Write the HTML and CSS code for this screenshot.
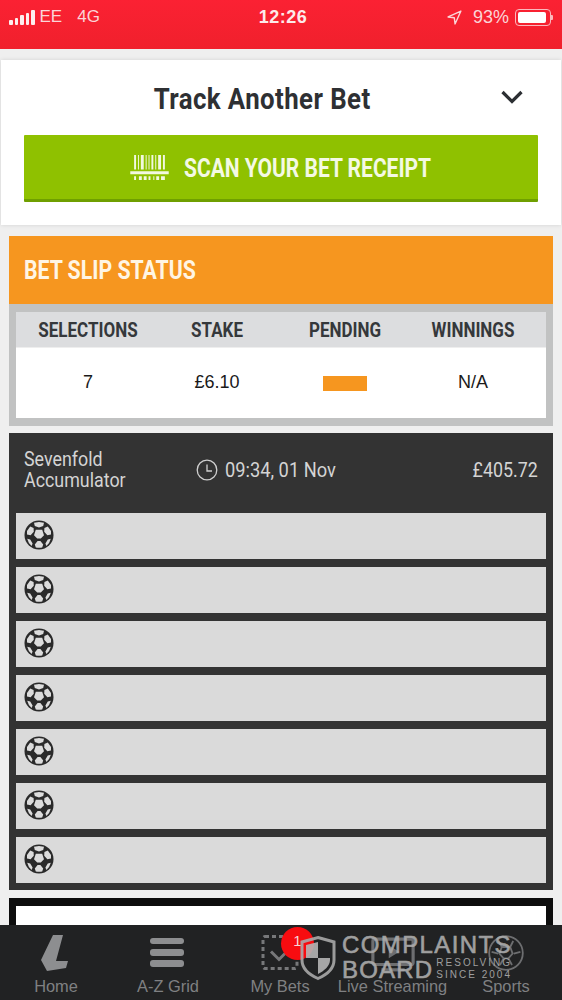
FILE: index.html
```html
<!DOCTYPE html>
<html lang="en">
<head>
<meta charset="utf-8">
<title>Bet Tracker</title>
<link rel="stylesheet" href="styles.css">
</head>
<body>
<svg class="defs" width="0" height="0" aria-hidden="true">
  <symbol id="ball" viewBox="0 0 30 30">
    <circle cx="15" cy="15" r="14.5" fill="#2a2a2a"/>
    <path class="panel" d="M10 2.800 15 2l5 .8-.8 3.200-4.200 1.600L10.800 6zM3 11l3.200-4.400 3.400 1.400.2 3.800-3.200 3.400-3.600-.6zM27 11l-3.200-4.400-3.400 1.400-.2 3.800 3.200 3.400 3.600-.6zM11.800 9.800h6.400l1.800 5.400-3.200 3.400h-3.600L10 15.200zM3.200 18.800l3 .8 2.400 3.800-1 2.600a13 13 0 0 1-4.400-7.200zM26.800 18.800l-3 .8-2.400 3.800 1 2.600a13 13 0 0 0 4.400-7.200zM10.800 24.400l2.800-3.400h2.800l2.800 3.400-1 3a13 13 0 0 1-6.400 0z"/>
  </symbol>
</svg>
<div class="page">
  <header class="status">
    <div class="status-left">
      <span class="signal"><i class="s1"></i><i class="s2"></i><i class="s3"></i><i class="s4"></i><i class="s5"></i></span>
      <span>EE</span><span class="net">4G</span>
    </div>
    <div class="status-time">12:26</div>
    <div class="status-right">
      <svg class="arrow" viewBox="0 0 14 14"><path d="M13 1 1 6.500l5.800.7.700 5.800z" fill="none" stroke="#fbd5d8" stroke-width="1.300" stroke-linejoin="round"/></svg>
      <span class="battery-pct">93%</span>
      <span class="battery"><span class="battery-fill"></span></span><span class="battery-tip"></span>
    </div>
  </header>

  <section class="track">
    <div class="track-head">
      <h1>Track Another Bet</h1>
      <svg class="chevron" viewBox="0 0 24 16"><path d="M2.500 3 12 12.500 21.500 3" fill="none" stroke="#2c2f33" stroke-width="3.200"/></svg>
    </div>
    <button class="scan">
      <svg class="barcode" viewBox="0 0 40 26"><path fill="#f2f8e0" d="M4 0h2v15H4zM8 0h1v15H8zM11 0h3v15h-3zM16 0h1v15h-1zM19 0h1v15h-1zM22 0h2v15h-2zM26 0h1v15h-1zM29 0h3v15h-3zM34 0h2v15h-2zM0 17h40v3H0zM4 22h2v4H4zM9 22h3v4H9zM14 22h3v4h-3zM19 22h2v4h-2zM24 22h1v4h-1zM27 22h3v4h-3zM32 22h4v4h-4z"/></svg>
      <span class="cond">SCAN YOUR BET RECEIPT</span>
    </button>
  </section>

  <section class="slip">
    <h2><span class="cond">BET SLIP STATUS</span></h2>
    <div class="slip-body">
      <div class="slip-row slip-labels">
        <span class="cond">SELECTIONS</span><span class="cond">STAKE</span><span class="cond">PENDING</span><span class="cond">WINNINGS</span>
      </div>
      <div class="slip-row slip-values">
        <span>7</span><span>£6.10</span><span><i class="pending"></i></span><span>N/A</span>
      </div>
    </div>
  </section>

  <section class="acca">
    <div class="acca-head">
      <div class="acca-name"><span class="cond">Sevenfold<br>Accumulator</span></div>
      <div class="acca-time">
        <svg class="clock" viewBox="0 0 22 22"><circle cx="11" cy="11" r="9.800" fill="none" stroke="#d0d0d0" stroke-width="1.300"/><path d="M11 5.500V12h5" fill="none" stroke="#d0d0d0" stroke-width="1.300"/></svg>
        <span class="cond">09:34, 01 Nov</span>
      </div>
      <div class="acca-return"><span class="cond">£405.72</span></div>
    </div>
    <div class="legs">
      <div class="leg"><svg class="ball"><use href="#ball"/></svg></div>
      <div class="leg"><svg class="ball"><use href="#ball"/></svg></div>
      <div class="leg"><svg class="ball"><use href="#ball"/></svg></div>
      <div class="leg"><svg class="ball"><use href="#ball"/></svg></div>
      <div class="leg"><svg class="ball"><use href="#ball"/></svg></div>
      <div class="leg"><svg class="ball"><use href="#ball"/></svg></div>
      <div class="leg"><svg class="ball"><use href="#ball"/></svg></div>
    </div>
  </section>

  <section class="next"><div class="next-inner"></div></section>

  <nav class="tabs">
    <a class="tab tab-home">
      <svg class="ico" viewBox="0 0 27 36"><path fill="#8d8e90" d="M12 0h10l-7 26h12l-2 7-19 3-6-11z"/></svg>
      <span>Home</span>
    </a>
    <a class="tab tab-az">
      <svg class="ico" viewBox="0 0 36 30"><g fill="#8d8e90"><rect x="1" y="0" width="34" height="6" rx="3"/><rect x="1" y="11" width="34" height="7" rx="3"/><rect x="1" y="22" width="34" height="7" rx="3"/></g></svg>
      <span>A-Z Grid</span>
    </a>
    <a class="tab tab-bets">
      <svg class="ico" viewBox="0 0 38 36"><rect x="2" y="2" width="34" height="32" rx="2" fill="none" stroke="#77787a" stroke-width="3" stroke-dasharray="4 3"/><path d="M10 17l8 8 11-11" fill="none" stroke="#77787a" stroke-width="3"/></svg>
      <span>My Bets</span>
      <b class="badge">1</b>
    </a>
    <a class="tab tab-live">
      <svg class="ico" viewBox="0 0 42 34"><rect x="2" y="2" width="38" height="24" rx="2" fill="none" stroke="#6d6e70" stroke-width="3"/><path d="M17 8l10 6-10 6z" fill="#6d6e70"/><path d="M10 31h22" stroke="#6d6e70" stroke-width="3"/></svg>
      <span>Live Streaming</span>
    </a>
    <a class="tab tab-sports">
      <svg class="ico" viewBox="0 0 30 30"><circle cx="15" cy="15" r="14" fill="none" stroke="#6d6e70" stroke-width="1.500"/><path d="M11.500 10h7l2 5.500-3.500 4h-4l-3.500-4zM11.500 10 9 5M18.500 10 21 5M8.500 15.500 3 14M21.500 15.500 27 14M13 19.500 10 25M17 19.500l3 5.500" fill="none" stroke="#6d6e70" stroke-width="1.500"/></svg>
      <span>Sports</span>
    </a>
  </nav>

  <div class="watermark">
    <svg class="shield" viewBox="0 0 36 44"><path d="M18 1.500 34 6v18c0 9-8 15-16 18.500C10 39 2 33 2 24V6z" fill="none" stroke="#a9a9a9" stroke-width="3"/><path d="M18 6 6 9v13h12zM18 22v16c6-3 12-8 12-14v-2z" fill="#b5b5b5"/></svg>
    <div class="wm-text">
      <div class="wm-top">COMPLAINTS</div>
      <div class="wm-bottom"><span class="wm-board">BOARD</span><span class="wm-small">RESOLVING<br>SINCE 2004</span></div>
    </div>
  </div>
</div>
</body>
</html>
```
FILE: styles.css
```css
* { box-sizing: border-box; }
html, body { margin: 0; padding: 0; }
body { font-family: "Liberation Sans", Arial, sans-serif; background: #efefef; }
.defs { position: absolute; }
.panel { fill: #dcdcdc; }
.page { position: relative; width: 562px; height: 1000px; overflow: hidden; background: #efefef; }
.cond { display: inline-block; font-family: Roboto, "Liberation Sans", sans-serif; transform: scaleX(.85); white-space: nowrap; }

.status { height: 49px; padding: 0 8px 15px 9px; background: linear-gradient(#fb2133, #f0202c); color: #fbd5d8; font-size: 17px; display: flex; align-items: center; position: relative; }
.status-left { display: flex; align-items: center; gap: 5px; flex: 1; }
.status-right { display: flex; align-items: center; flex: 1; justify-content: flex-end; }
.net { margin-left: 10px; }
.signal { display: flex; align-items: flex-end; gap: 2px; height: 15px; }
.signal i { width: 3.500px; background: #fdeeee; border-radius: 1px; }
.s1 { height: 5px; } .s2 { height: 7px; } .s3 { height: 10px; } .s4 { height: 12px; } .s5 { height: 15px; }
.status-time { font-size: 18px; font-weight: 700; letter-spacing: .5px; color: #fdeaea; margin-left: 3px; }
.arrow { width: 15px; height: 15px; margin-right: 11px; }
.battery-pct { font-size: 18px; }
.battery { width: 36px; height: 17px; margin-left: 6px; border: 1px solid #fbb8bd; border-radius: 4px; padding: 2px; display: flex; }
.battery-fill { flex: 1; background: #fff; border-radius: 2px; margin-right: 2px; }
.battery-tip { width: 2px; height: 5px; background: #fbb8bd; border-radius: 0 1px 1px 0; margin-right: 1px; }

.track { margin: 11px 1px 0; height: 165px; padding: 0 23px; background: #fff; box-shadow: 0 0 4px rgba(0,0,0,.12); }
.track-head { height: 75px; display: flex; align-items: center; justify-content: center; position: relative; }
.track-head h1 { margin: 0 0 -2px; font: 700 30px/1 Roboto, "Liberation Sans", sans-serif; letter-spacing: .5px; color: #2e3033; transform: scaleX(.86); position: relative; left: -19px; }
.chevron { position: absolute; right: 14px; top: 29px; width: 24px; height: 16px; }
.scan { width: 514px; height: 67px; border: 0; border-bottom: 3px solid #6f9f00; border-radius: 1px; background: #8fc100; color: #f4f9e4; display: flex; align-items: center; justify-content: center; padding: 2px 0 0; }
.scan svg { margin-top: -2px; }
.scan .cond { font-size: 25px; font-weight: 700; transform: scaleX(.84); transform-origin: left center; width: 248px; margin-left: 15px; }
.barcode { width: 39px; height: 25px; }

.slip { margin: 11px 9px 0; }
.slip h2 { margin: 0; height: 68px; padding: 0 15px; background: #f6961f; color: #fff5e4; display: flex; align-items: center; font-size: 25px; font-weight: 700; }
.slip h2 .cond { transform: scaleX(.85); transform-origin: left center; }
.slip-body { padding: 8px 7px; background: #c1c2c2; height: 122px; }
.slip-row { display: grid; grid-template-columns: 144px 114px 142px 114px; padding-right: 16px; text-align: center; align-items: center; }
.slip-labels { height: 36px; background: #dcdddf; color: #35383b; font-size: 20px; font-weight: 700; border-bottom: 1px solid #eee; }
.slip-values { height: 70px; padding-bottom: 2px; background: #fff; color: #1a1a1a; font-size: 18px; }
.pending { display: block; width: 44px; height: 15px; margin: 3px auto 0; background: #f6961f; }

.acca { margin: 7px 9px 0; background: #333; padding: 0 7px 6px; height: 457px; }
.acca-head { height: 80px; display: flex; align-items: center; color: #d4d4d4; font-size: 21px; }
.acca-name { width: 180px; padding-left: 8px; line-height: 21px; margin-top: -6px; }
.acca-name .cond, .acca-time .cond { transform-origin: left center; }
.acca-time { display: flex; align-items: center; gap: 7px; margin-top: -6px; }
.acca-time .cond { transform: scaleX(.87); }
.clock { width: 22px; height: 22px; }
.acca-return { margin-left: auto; margin-right: 8px; margin-top: -6px; }
.acca-return .cond { transform-origin: right center; }
.legs { display: flex; flex-direction: column; gap: 8px; }
.leg { height: 46px; background: #dadada; padding: 6px 8px; display: flex; }
.ball { width: 30px; height: 32px; }

.next { margin: 8px 9px 0; padding: 8px 7px 0; background: #0d0d0d; height: 100px; }
.next-inner { height: 100px; background: #fff; }

.tabs { position: absolute; left: 0; right: 0; bottom: 0; height: 75px; background: #212223; display: grid; grid-template-columns: 112px 112px 112px 114px 112px; }
.tab { position: relative; display: flex; flex-direction: column; align-items: center; justify-content: flex-end; padding-bottom: 4px; color: #7f8082; font-size: 16.400px; }
.tab span { white-space: nowrap; }
.ico { position: absolute; }
.tab-home .ico { left: 41px; top: 10px; width: 27px; height: 36px; }
.tab-az .ico { left: 37px; top: 13px; width: 36px; height: 30px; }
.tab-bets .ico { left: 37px; top: 9px; width: 38px; height: 37px; }
.tab-live .ico { left: 34px; top: 12px; width: 46px; height: 36px; }
.tab-sports .ico { left: 38px; top: 10px; width: 36px; height: 36px; }
.tab-live span { margin-left: -1px; }
.badge { position: absolute; left: 57px; top: 2px; width: 33px; height: 33px; border-radius: 50%; background: #f80c10; color: #f4d8d8; font-size: 15px; font-weight: 400; text-align: center; padding-top: 5px; }

.watermark { position: absolute; left: 300px; top: 935px; display: flex; gap: 6px; opacity: .9; color: #adadad; }
.shield { width: 36px; height: 46px; }
.wm-text { display: flex; flex-direction: column; margin-top: -2px; }
.wm-top { font-size: 24px; line-height: 24px; letter-spacing: 1.400px; -webkit-text-stroke: .6px #adadad; }
.wm-bottom { display: flex; align-items: center; gap: 3px; }
.wm-board { font-size: 24px; line-height: 23px; letter-spacing: 1.200px; -webkit-text-stroke: .6px #adadad; }
.wm-small { font-size: 10px; line-height: 12px; letter-spacing: 2px; }
```
